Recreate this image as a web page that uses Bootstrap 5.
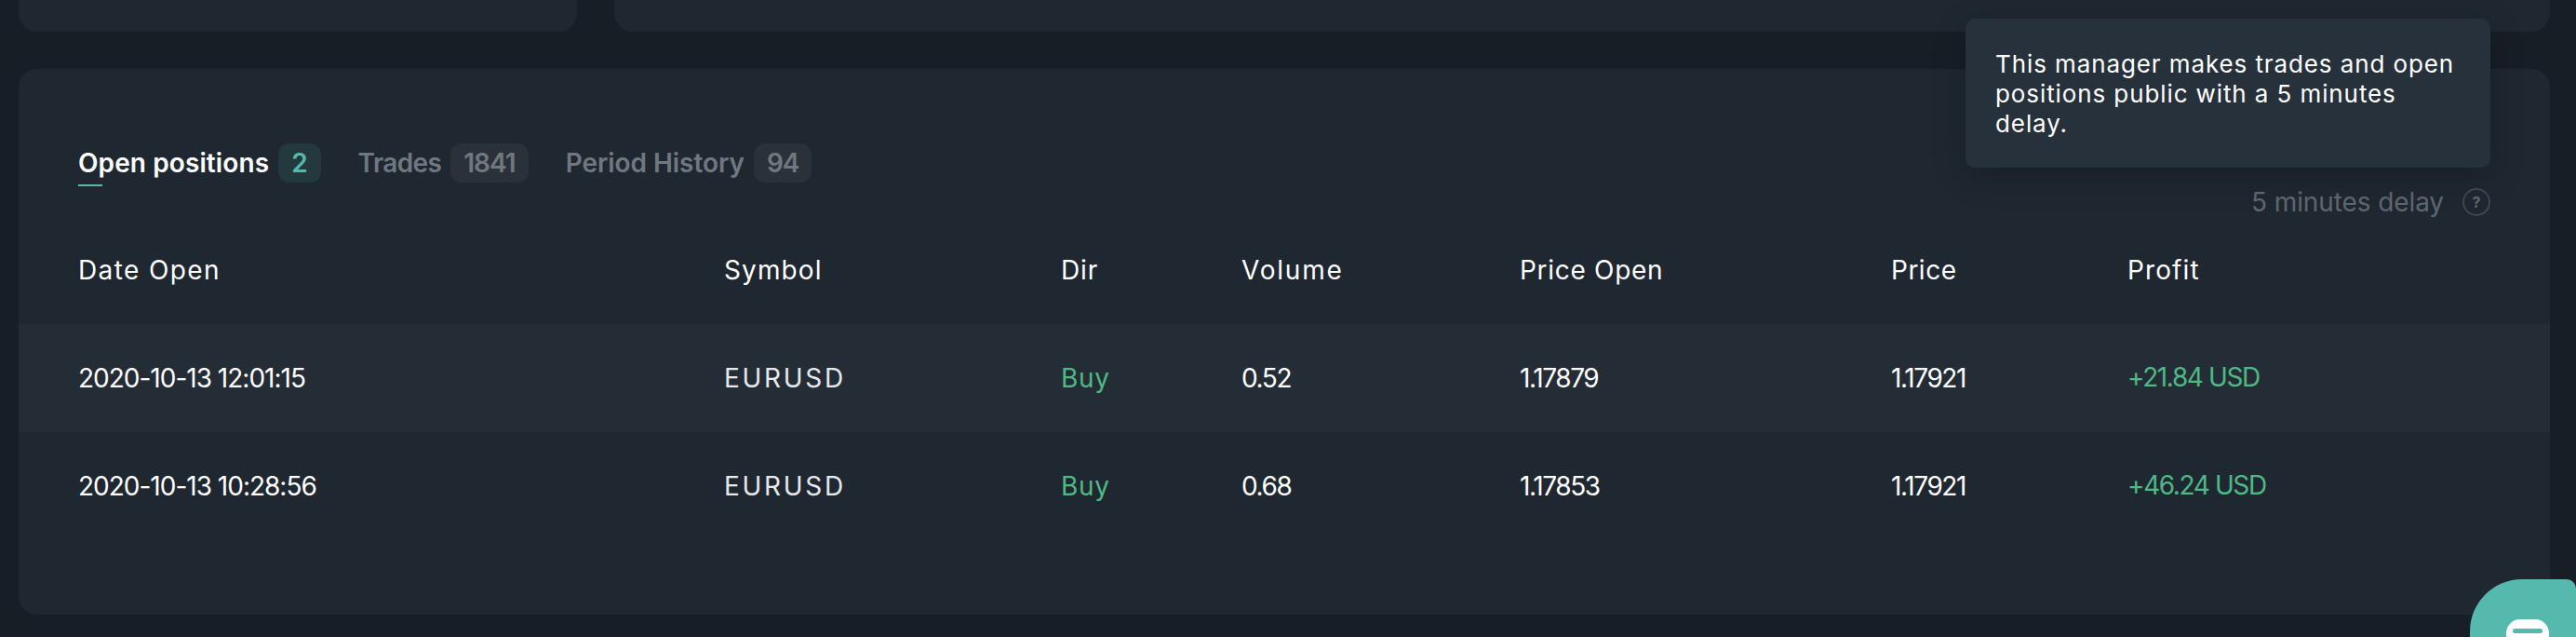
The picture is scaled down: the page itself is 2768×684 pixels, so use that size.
<!doctype html>
<html lang="en">
<head>
<meta charset="utf-8">
<title>Positions</title>
<link href="https://cdn.jsdelivr.net/npm/bootstrap@5.3.0/dist/css/bootstrap.min.css" rel="stylesheet">
<style>
html,body{height:684px;overflow:hidden}
body{background:#171e25;color:#fff;font-family:"Inter","Noto Sans",sans-serif;font-size:28px;position:relative}
.page-wrap{padding:0 28px 0 20px}
.stub-row{height:34px;gap:40px}
.stub{background:#1f2731;border-radius:0 0 20px 20px}
.stub-a{width:600px}
.panel{background:#1f2731;border-radius:20px;margin-top:40px;height:586px;overflow:hidden}
.panel-head{padding:80px 64px 0}
.tabs-row{gap:40px;padding-bottom:32px}
.tab-item{gap:10px;height:46px;position:relative;color:#70787f;font-weight:600;line-height:42px;padding-bottom:4px;letter-spacing:-.05px}
.tab-item.is-on{color:#fff;letter-spacing:.1px}
.tab-item.is-short{letter-spacing:-.6px}
.tab-item.is-on::after{content:"";position:absolute;left:0;bottom:0;width:26px;height:2px;background:#55b9ad}
.tab-count{height:42px;border-radius:12px;padding:0 14px;background:#2a3139;display:block;letter-spacing:-1px}
.is-on .tab-count{background:#24393e;color:#55b9ad;letter-spacing:0}
.delay{color:#5f676f;font-size:28px;line-height:30px;gap:20px;letter-spacing:-.1px}
.delay svg{display:block;width:30px;height:30px}
.pos-table{width:100%;table-layout:fixed;margin:0;--bs-table-bg:transparent;--bs-table-color:#fff;color:#fff}
.pos-table th,.pos-table td{height:116px;padding:0;border:0;vertical-align:middle;font-weight:400;background:transparent;box-shadow:none;color:#fff;white-space:nowrap}
.pos-table td{letter-spacing:-1.4px}
.pos-table tbody tr:first-child td{background:#242c35}
.pos-table th:first-child,.pos-table td:first-child{padding-left:64px}
.c1{width:758px;letter-spacing:1.4px}.c2{width:362px;letter-spacing:1.1px}.c3{width:194px;letter-spacing:.9px}.c4{width:299px;letter-spacing:1.8px}.c5{width:399px;letter-spacing:.7px}.c6{width:254px;letter-spacing:.5px}.c7{letter-spacing:1.1px}
.pos-table td.stamp{letter-spacing:-1px}
.pos-table td.sym{color:#e6e9ec;letter-spacing:2.7px}
.pos-table td.up{color:#4fb985}
.pos-table td.dir{letter-spacing:.7px}
.pos-table td.pft{padding-bottom:3px}
.hint{left:2112px;top:20px;width:564px;height:160px;padding:33px 32px 31px;background:#27313b;border-radius:10px;box-shadow:0 10px 36px rgba(0,0,0,.22);font-size:26px;line-height:32px;color:#fff;letter-spacing:.9px}
.chat-fab{left:2654px;top:622px;width:114px;height:62px;background:#55b9ad;border-radius:56px 10px 0 0;overflow:hidden}
.chat-fab svg{position:absolute;left:39px;top:43px}
</style>
</head>
<body>
<div class="page-wrap">
  <div class="d-flex stub-row">
    <div class="stub stub-a"></div>
    <div class="stub flex-grow-1"></div>
  </div>
  <section class="panel">
    <div class="panel-head d-flex justify-content-between align-items-end">
      <div class="d-flex tabs-row">
        <div class="tab-item is-on d-flex"><span>Open positions</span><span class="tab-count">2</span></div>
        <div class="tab-item is-short d-flex"><span>Trades</span><span class="tab-count">1841</span></div>
        <div class="tab-item d-flex"><span>Period History</span><span class="tab-count">94</span></div>
      </div>
      <div class="delay d-flex align-items-center">
        <span>5 minutes delay</span>
        <svg viewBox="0 0 30 30" aria-hidden="true"><circle cx="15" cy="15" r="14" fill="none" stroke="#3f474f" stroke-width="2"/><text x="15" y="20.5" text-anchor="middle" font-family="Inter" font-size="16" font-weight="700" fill="#5f676f">?</text></svg>
      </div>
    </div>
    <table class="table pos-table">
      <thead>
        <tr><th class="c1">Date Open</th><th class="c2">Symbol</th><th class="c3">Dir</th><th class="c4">Volume</th><th class="c5">Price Open</th><th class="c6">Price</th><th class="c7">Profit</th></tr>
      </thead>
      <tbody>
        <tr><td class="stamp">2020-10-13 12:01:15</td><td class="sym">EURUSD</td><td class="up dir">Buy</td><td>0.52</td><td>1.17879</td><td>1.17921</td><td class="up pft">+21.84 USD</td></tr>
        <tr><td class="stamp">2020-10-13 10:28:56</td><td class="sym">EURUSD</td><td class="up dir">Buy</td><td>0.68</td><td>1.17853</td><td>1.17921</td><td class="up pft">+46.24 USD</td></tr>
      </tbody>
    </table>
  </section>
</div>
<div class="hint position-absolute">This manager makes trades and open positions public with a 5 minutes delay.</div>
<div class="chat-fab position-absolute">
  <svg width="46" height="40" viewBox="0 0 46 40" aria-hidden="true"><rect width="46" height="40" rx="15" fill="#fff"/><rect x="7" y="10" width="32" height="5" rx="2.5" fill="#55b9ad"/></svg>
</div>
</body>
</html>
